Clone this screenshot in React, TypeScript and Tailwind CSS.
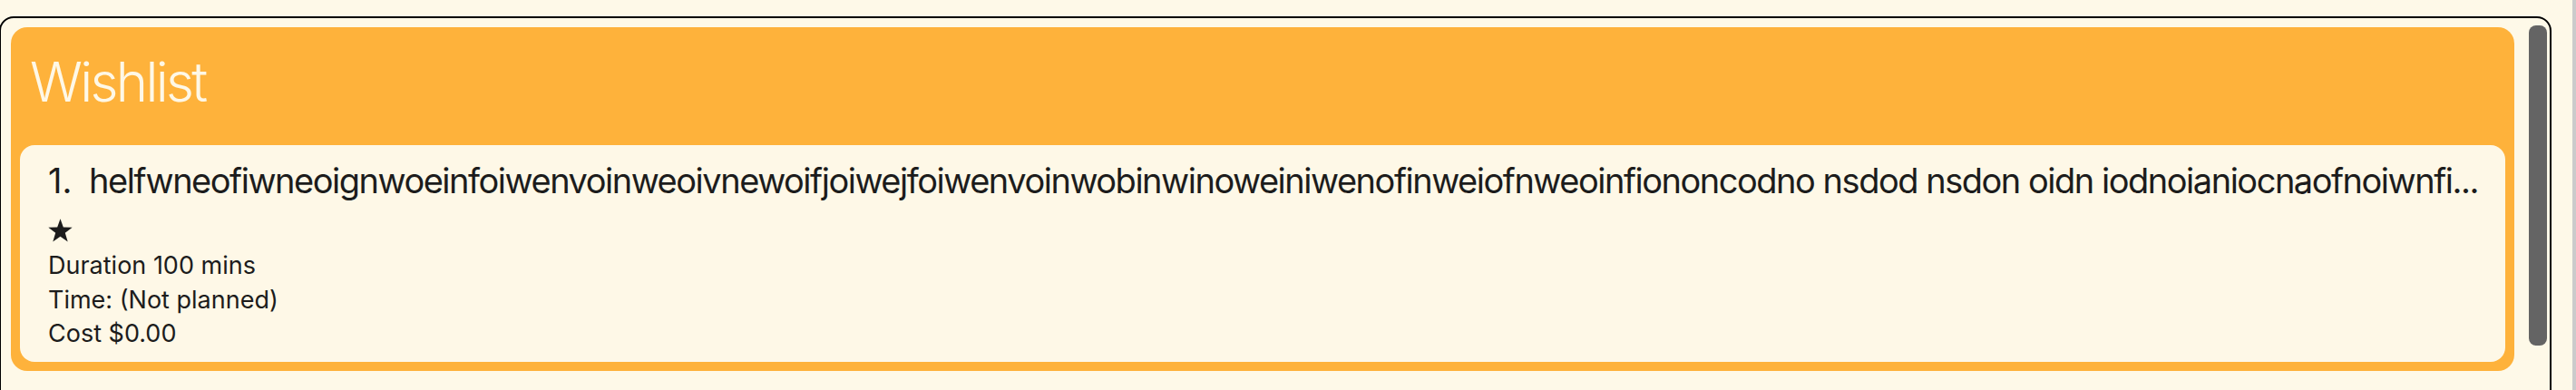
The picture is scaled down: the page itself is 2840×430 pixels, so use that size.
import React from "react";

const NAME =
  "helfwneofiwneoignwoeinfoiwenvoinweoivnewoifjoiwejfoiwenvoinwobinwinoweiniwenofinweiofnweoinfiononcodno nsdod nsdon oidn iodnoianiocnaofnoiwnfi...";

function Star() {
  return (
    <svg width="27" height="26" viewBox="0 0 26 25" aria-hidden="true">
      <path
        d="M13 0.3 L16.2 9.2 L25.7 9.4 L18.1 15.2 L20.9 24.5 L13 19 L5.1 24.5 L7.9 15.2 L0.3 9.4 L9.8 9.2 Z"
        fill="#1c1c1c"
      />
    </svg>
  );
}

export default function App() {
  return (
    <div
      className="w-[2840px] h-[430px] bg-[#fef9e8] flex overflow-hidden"
      style={{ fontFamily: "Inter, 'Noto Sans', sans-serif" }}
    >
      <div className="flex-1 overflow-hidden">
        <div className="ml-[-1px] mt-[18px] w-[2814px] h-[440px] border-2 border-black rounded-[16px] pl-[11px] pt-[10px] flex items-start">
          <div className="w-[2760px] h-[379px] bg-[#feb23b] rounded-[18px] flex flex-col px-[10px] pb-[10px]">
            <div className="h-[130px] pl-[11px] pt-[30px] text-[60px] leading-[60px] font-light tracking-[-0.045em] text-[#fef8e7]">
              Wishlist
            </div>
            <div className="flex-1 bg-[#fef8e7] rounded-[16px] pl-[31px] pr-[20px] pt-[16px] text-[#1c1c1c]">
              <div className="flex whitespace-nowrap text-[38px] leading-[46px]">
                <span className="w-[45px] shrink-0">1.</span>
                <span className="tracking-[-0.039em]">{NAME}</span>
              </div>
              <div className="mt-[19px] h-[26px]">
                <Star />
              </div>
              <div className="mt-[7px] text-[27px] leading-[37.5px]">
                <div>Duration 100 mins</div>
                <div>Time: (Not planned)</div>
                <div>Cost $0.00</div>
              </div>
            </div>
          </div>
          <div className="ml-[16px] mt-[-2px] w-[20px] h-[353px] bg-[#646464] rounded-[8px]" />
        </div>
      </div>
      <div className="w-[4px] h-full bg-[#cbcbcb]" />
    </div>
  );
}
